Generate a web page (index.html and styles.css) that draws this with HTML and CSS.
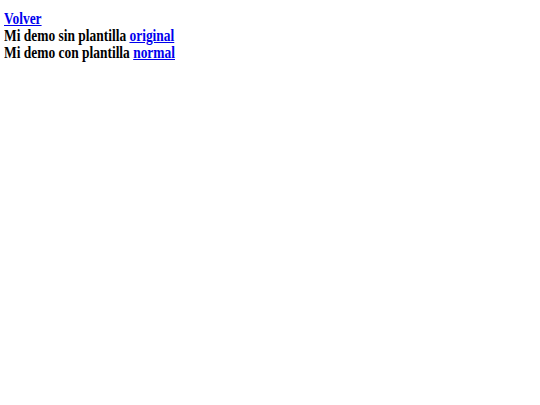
FILE: index.html
```html
<!DOCTYPE html>
<html>
<head>
<meta charset="utf-8">
<link rel="stylesheet" href="styles.css">
</head>
<body>
<div class="links">
<a href="#">Volver</a>
<div>Mi demo sin plantilla <a href="#">original</a></div>
<div>Mi demo con plantilla <a href="#">normal</a></div>
</div>
</body>
</html>
```
FILE: styles.css
```css
body {
  margin: 0;
  padding: 10px 4px;
  font-family: "Liberation Serif", serif;
  font-weight: bold;
  font-size: 16px;
  line-height: 17px;
  color: #000;
  background: #fff;
}
.links {
  transform: scaleX(0.84);
  transform-origin: left top;
}
.links a { color: #0000ee; text-decoration: underline; }
```
